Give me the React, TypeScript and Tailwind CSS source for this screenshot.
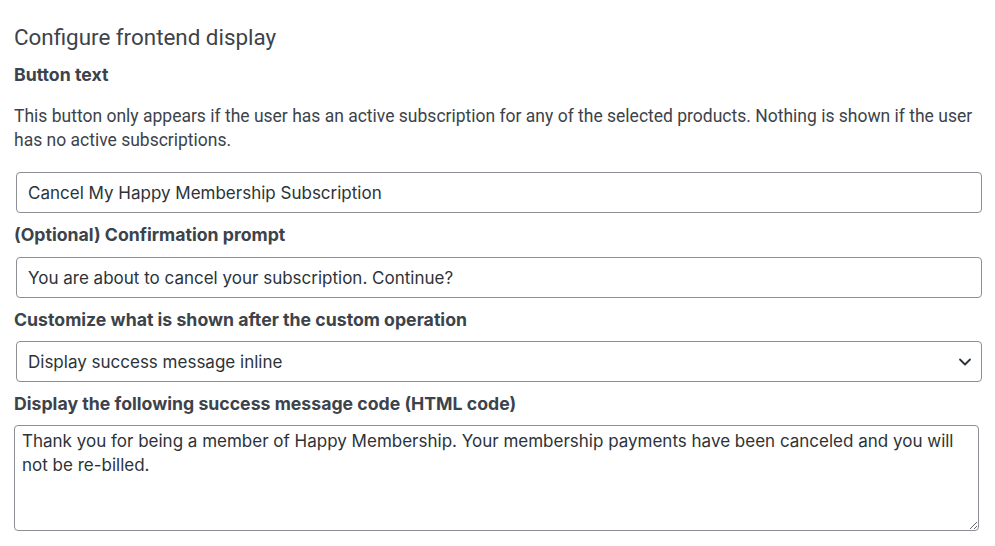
import React from "react";

const fieldCls =
  "block w-[966px] h-[41px] rounded-[4px] border border-[#8c8f94] bg-white px-[11px] text-[17px] text-[#2c3338] outline-none";

const labelCls =
  "block text-[17.7px] font-bold leading-[22px] text-[#3c434a]";

export default function App() {
  return (
    <div className="w-[995px] h-[546px] bg-white overflow-hidden pl-[14px] pt-[24px] font-['Roboto',sans-serif] text-[#3c434a]">
      <h2 className="text-[22.4px] leading-[26px] font-normal text-[#3c434a]">
        Configure frontend display
      </h2>
      <div className={labelCls + " mt-[14px] font-['Inter',sans-serif]"}>Button text</div>
      <p className="mt-[18px] w-[965px] text-[17.5px] leading-[24px]">
        This button only appears if the user has an active subscription for any of the selected products. Nothing is shown if the user has no active subscriptions.
      </p>
      <div className="font-['Inter',sans-serif] pl-[2px]">
        <input className={fieldCls + " mt-[20px]"} defaultValue="Cancel My Happy Membership Subscription" />
        <label className={labelCls + " -ml-[2px] mt-[11px] mb-[11px]"}>
          (Optional) Confirmation prompt
        </label>
        <input className={fieldCls} defaultValue="You are about to cancel your subscription. Continue?" />
        <label className={labelCls + " -ml-[2px] mt-[11px] mb-[10px]"}>
          Customize what is shown after the custom operation
        </label>
        <div className="relative w-[966px]">
          <select className={fieldCls + " appearance-none pt-[3px]"} defaultValue="inline">
            <option value="inline">Display success message inline</option>
          </select>
          <svg className="pointer-events-none absolute right-[10px] top-[14px]" width="14" height="14" viewBox="0 0 14 14" fill="none">
            <path d="M2 4.5 L7 9.5 L12 4.5" stroke="#2c3338" strokeWidth="1.8" strokeLinecap="round" strokeLinejoin="round" />
          </svg>
        </div>
        <label className={labelCls + " -ml-[2px] mt-[11px] mb-[10px]"}>
          Display the following success message code (HTML code)
        </label>
        <textarea
          className="block -ml-[2px] w-[965px] h-[106px] rounded-[4px] border border-[#8c8f94] bg-white px-[7px] pt-[3px] text-[17px] leading-[24px] text-[#2c3338] outline-none resize-y"
          defaultValue="Thank you for being a member of Happy Membership. Your membership payments have been canceled and you will not be re-billed."
        />
      </div>
    </div>
  );
}
